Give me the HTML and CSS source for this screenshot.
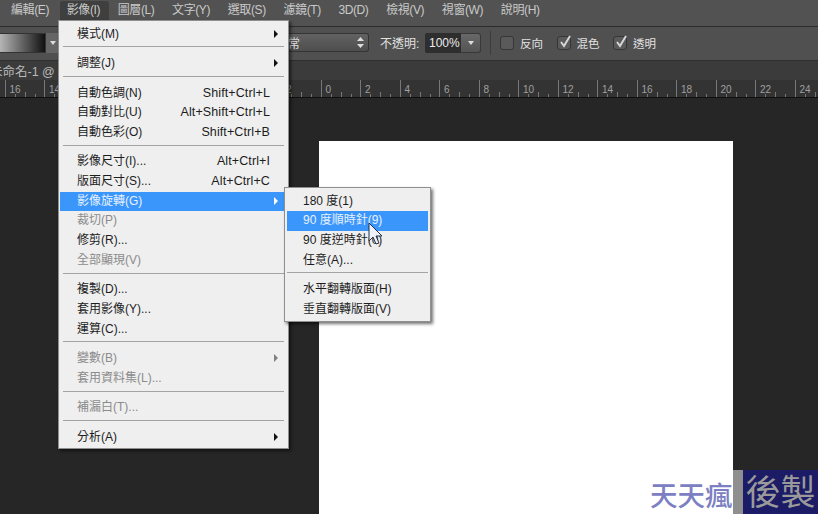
FILE: index.html
```html
<!DOCTYPE html>
<html lang="zh-Hant">
<head>
<meta charset="utf-8">
<title>影像旋轉</title>
<link rel="stylesheet" href="styles.css">
</head>
<body>
<div class="app">
  <nav class="menubar">
    <span class="mi">編輯(E)</span>
    <span class="mi active">影像(I)</span>
    <span class="mi">圖層(L)</span>
    <span class="mi">文字(Y)</span>
    <span class="mi">選取(S)</span>
    <span class="mi">濾鏡(T)</span>
    <span class="mi">3D(D)</span>
    <span class="mi">檢視(V)</span>
    <span class="mi">視窗(W)</span>
    <span class="mi">說明(H)</span>
  </nav>
  <div class="options">
    <div class="swatch"></div>
    <div class="swatch-btn"><i class="down"></i></div>
    <div class="select"><span>正常</span><svg class="updown" width="7" height="11" viewBox="0 0 7 11"><path d="M3.5 0 7 4H0zM0 7h7l-3.5 4z" fill="#ddd"/></svg></div>
    <span class="lbl op-lbl">不透明:</span>
    <div class="num">100%</div>
    <div class="num-btn"><i class="down"></i></div>
    <div class="vsep"></div>
    <span class="cb"></span><span class="lbl cb-lbl">反向</span>
    <span class="cb"><svg width="15" height="15" viewBox="0 0 15 15"><path d="M3 7l3 4 6-10" fill="none" stroke="#d6d6d6" stroke-width="2"/></svg></span><span class="lbl cb-lbl">混色</span>
    <span class="cb"><svg width="15" height="15" viewBox="0 0 15 15"><path d="M3 7l3 4 6-10" fill="none" stroke="#d6d6d6" stroke-width="2"/></svg></span><span class="lbl cb-lbl">透明</span>
  </div>
  <div class="tabs"><span class="tab">未命名-1 @</span></div>
  <div class="ruler">
    <span class="rc">16</span><span class="rc">14</span><span class="rc">12</span><span class="rc">10</span><span class="rc">8</span><span class="rc">6</span><span class="rc">4</span><span class="rc">2</span><span class="rc">0</span><span class="rc">2</span><span class="rc">4</span><span class="rc">6</span><span class="rc">8</span><span class="rc">10</span><span class="rc">12</span><span class="rc">14</span><span class="rc">16</span><span class="rc">18</span><span class="rc">20</span><span class="rc">22</span><span class="rc">24</span>
  </div>
  <div class="canvas"><div class="doc"></div></div>
</div>

<div class="menu main-menu">
  <div class="row"><span>模式(M)</span><i class="arr"></i></div>
  <hr>
  <div class="row"><span>調整(J)</span><i class="arr"></i></div>
  <hr>
  <div class="row"><span>自動色調(N)</span><em>Shift+Ctrl+L</em></div>
  <div class="row"><span>自動對比(U)</span><em>Alt+Shift+Ctrl+L</em></div>
  <div class="row"><span>自動色彩(O)</span><em>Shift+Ctrl+B</em></div>
  <hr>
  <div class="row"><span>影像尺寸(I)...</span><em>Alt+Ctrl+I</em></div>
  <div class="row"><span>版面尺寸(S)...</span><em>Alt+Ctrl+C</em></div>
  <div class="row hl"><span>影像旋轉(G)</span><i class="arr"></i></div>
  <div class="row off"><span>裁切(P)</span></div>
  <div class="row"><span>修剪(R)...</span></div>
  <div class="row off"><span>全部顯現(V)</span></div>
  <hr>
  <div class="row"><span>複製(D)...</span></div>
  <div class="row"><span>套用影像(Y)...</span></div>
  <div class="row"><span>運算(C)...</span></div>
  <hr>
  <div class="row off"><span>變數(B)</span><i class="arr"></i></div>
  <div class="row off"><span>套用資料集(L)...</span></div>
  <hr>
  <div class="row off"><span>補漏白(T)...</span></div>
  <hr>
  <div class="row"><span>分析(A)</span><i class="arr"></i></div>
</div>

<div class="menu sub-menu">
  <div class="row"><span>180 度(1)</span></div>
  <div class="row hl"><span>90 度順時針(9)</span></div>
  <div class="row"><span>90 度逆時針(0)</span></div>
  <div class="row"><span>任意(A)...</span></div>
  <hr>
  <div class="row"><span>水平翻轉版面(H)</span></div>
  <div class="row"><span>垂直翻轉版面(V)</span></div>
</div>

<svg class="cursor" width="15" height="24" viewBox="0 0 15 24"><path d="M1 1v18l4-4 3 7 3-1-3-7h6z" fill="#eef2f8" stroke="#23304a" stroke-width="1"/></svg>

<div class="mark">
  <span class="mark-a">天天瘋</span>
  <span class="mark-gap"></span>
  <span class="mark-b">後製</span>
</div>
</body>
</html>
```
FILE: styles.css
```css
* { box-sizing: border-box; }
html, body { margin: 0; padding: 0; }
body {
  width: 818px; height: 514px; overflow: hidden; position: relative;
  background: #262626;
  font-family: "Liberation Sans", "Noto Sans CJK TC", sans-serif;
  font-size: 12px; color: #d8d8d8;
}
.app { display: flex; flex-direction: column; height: 514px; }

.menubar {
  height: 27px; flex: none; display: flex; align-items: flex-start; gap: 17.7px;
  background: #525252; border-bottom: 1px solid #2c2c2c;
  padding: 2px 0 0 11px;
}
.mi { height: 19px; line-height: 17px; color: #c9c9c9; white-space: nowrap; letter-spacing: -.4px; position: relative; }
.mi.active { z-index: 0; }
.mi.active::before {
  content: ""; position: absolute; z-index: -1; left: -7px; right: -9px; top: -1px; bottom: 0;
  background: #3f3f3f; border-radius: 3px 3px 0 0;
}

.options {
  height: 34px; flex: none; display: flex; align-items: center; padding-bottom: 2px;
  background: #505050; border-bottom: 1px solid #2e2e2e;
}
.swatch { width: 46px; height: 20px; background: linear-gradient(90deg, #b5b5b5, #111); border: 1px solid #333; border-left: 0; }
.swatch-btn { width: 13px; height: 20px; background: #666; display: flex; align-items: center; justify-content: center; }
.down { width: 0; height: 0; border: 3.5px solid transparent; border-top: 4px solid #ddd; border-bottom: 0; display: block; }
.select {
  margin-left: 200px; width: 110px; height: 19px; flex: none;
  background: linear-gradient(#626262, #4e4e4e); border: 1px solid #343434; border-left: 0; border-radius: 0 3px 3px 0;
  display: flex; align-items: center; justify-content: space-between; padding: 0 4px 0 17px;
  color: #dcdcdc; overflow: hidden;
}
.lbl { color: #e2e2e2; white-space: nowrap; font-size: 12px; }
.op-lbl { margin-left: 11px; width: 45px; }
.num { width: 36px; height: 20px; line-height: 20px; background: #2e2e2e; color: #ececec; padding-left: 4px; border-radius: 2px 0 0 2px; }
.num-btn { width: 20px; height: 20px; background: linear-gradient(#686868, #545454); border: 1px solid #383838; border-left: 0; border-radius: 0 3px 3px 0; display: flex; align-items: center; justify-content: center; }
.vsep { width: 1px; height: 24px; background: #3c3c3c; margin: 0 9px; }
.cb { width: 14px; height: 14px; background: #5a5a5a; border: 1px solid #363636; border-radius: 3px; flex: none; display: block; }
.cb svg { display: block; margin-top: -2px; }
.cb-lbl { margin: 0 13.5px 0 6px; width: 23px; font-size: 11.5px; }

.tabs { height: 19px; flex: none; background: #3b3b3b; overflow: hidden; }
.tab { display: block; margin-left: -10px; height: 19px; line-height: 22px; color: #b9b9b9; font-size: 12.5px; white-space: nowrap; }

.ruler {
  height: 18px; flex: none; display: flex; padding-left: 4.5px;
  background: #333; border-bottom: 1px solid #0f0f0f; overflow: hidden;
}
.rc {
  flex: 0 0 39.5px; padding: 4px 0 0 5px; font-size: 10px; line-height: 12px; color: #a0a0a0;
  background-image:
    linear-gradient(#777, #777),
    linear-gradient(#777, #777),
    linear-gradient(#777, #777),
    linear-gradient(#777, #777);
  background-repeat: no-repeat;
  background-size: 1px 17px, 1px 3px, 1px 5px, 1px 3px;
  background-position: 0 0, 10px 14px, 20px 12px, 30px 14px;
}

.canvas { flex: 1; background: #262626; padding: 43px 0 0 319px; overflow: hidden; min-height: 0; }
.doc { width: 414px; height: 400px; background: #fff; }

.menu {
  position: absolute; background: #efefef; border: 1px solid #8f8f8f;
  box-shadow: 2px 2px 3px rgba(0,0,0,.55); color: #1d1d1d; font-size: 12px;
}
.main-menu { left: 58px; top: 20px; width: 231px; height: 429px; padding: 3.6px 1px; }
.sub-menu { left: 284px; top: 187px; width: 147px; height: 135px; padding: 3.6px 2px; }
.row { height: 19.7px; line-height: 19.7px; display: flex; justify-content: space-between; align-items: center; position: relative; white-space: nowrap; }
.main-menu .row { padding: 0 17px 0 17px; }
.sub-menu .row { padding: 0 0 0 16px; }
.row em { font-style: normal; font-size: 12.5px; letter-spacing: .1px; }
.hl { background: #3b96fb; color: #e6f1ff; }
.off { color: #8b8b8b; }
.arr { position: absolute; right: 9px; top: 5px; width: 0; height: 0; border: 4px solid transparent; border-left: 4px solid #111; border-right: 0; }
.hl .arr { border-left-color: #fff; }
.off .arr { border-left-color: #808080; }
hr { border: 0; height: 1px; background: #a3a3a3; margin: 2px 3px 6.8px; }
.sub-menu hr { margin: 2px 0 6.8px; }

.cursor { position: absolute; left: 368px; top: 222px; }

.mark { position: absolute; left: 650px; top: 470px; width: 168px; height: 44px; display: flex; }
.mark-a { width: 83px; font-size: 27.5px; line-height: 44px; padding-top: 2px; color: #7c80c2; font-family: "Noto Sans CJK TC", sans-serif; font-weight: 500; white-space: nowrap; }
.mark-gap { width: 10px; background: #8f8f8f; }
.mark-b { width: 75px; background: #1b1b66; color: #9a9a9a; font-size: 35px; line-height: 40px; text-align: center; font-family: "Noto Sans CJK TC", sans-serif; white-space: nowrap; }
```
